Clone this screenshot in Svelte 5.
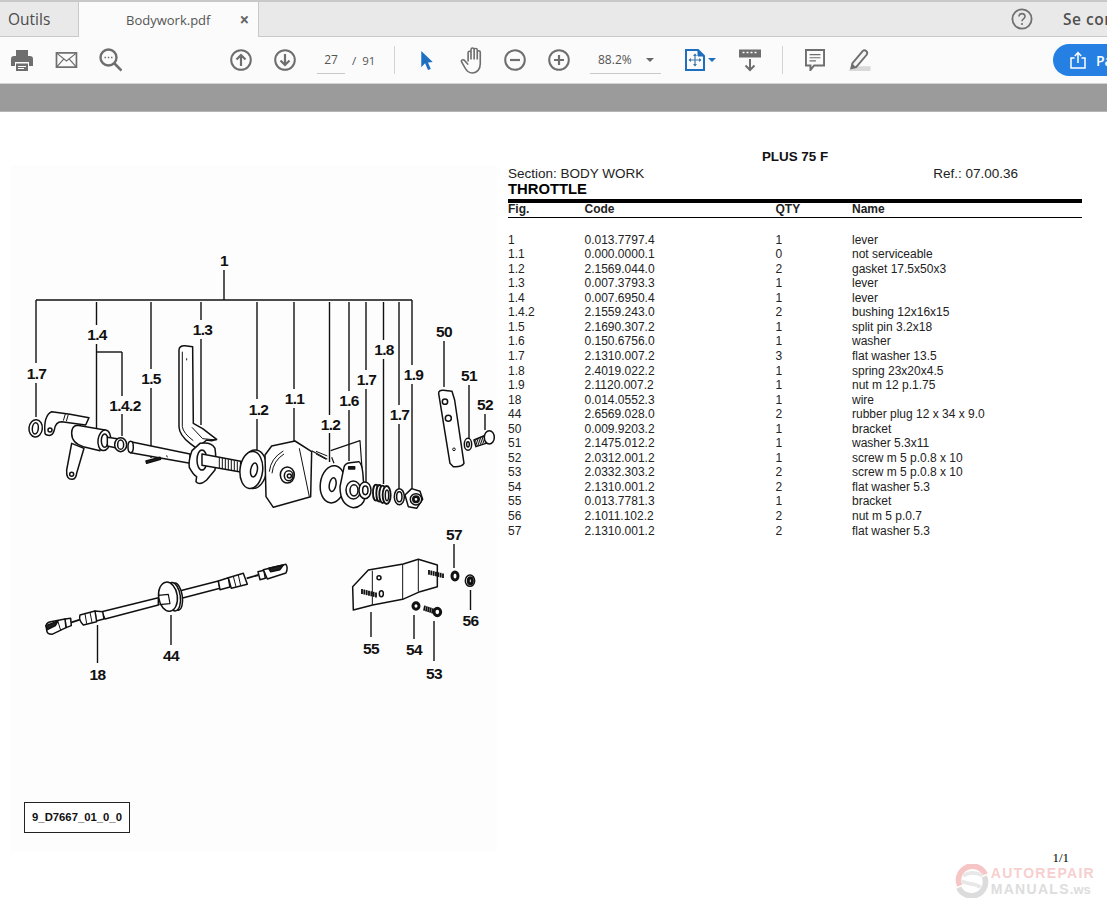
<script>
	const parts = [
		['1', '0.013.7797.4', '1', 'lever'],
		['1.1', '0.000.0000.1', '0', 'not serviceable'],
		['1.2', '2.1569.044.0', '2', 'gasket 17.5x50x3'],
		['1.3', '0.007.3793.3', '1', 'lever'],
		['1.4', '0.007.6950.4', '1', 'lever'],
		['1.4.2', '2.1559.243.0', '2', 'bushing 12x16x15'],
		['1.5', '2.1690.307.2', '1', 'split pin 3.2x18'],
		['1.6', '0.150.6756.0', '1', 'washer'],
		['1.7', '2.1310.007.2', '3', 'flat washer 13.5'],
		['1.8', '2.4019.022.2', '1', 'spring 23x20x4.5'],
		['1.9', '2.1120.007.2', '1', 'nut m 12 p.1.75'],
		['18', '0.014.0552.3', '1', 'wire'],
		['44', '2.6569.028.0', '2', 'rubber plug 12 x 34 x 9.0'],
		['50', '0.009.9203.2', '1', 'bracket'],
		['51', '2.1475.012.2', '1', 'washer 5.3x11'],
		['52', '2.0312.001.2', '1', 'screw m 5 p.0.8 x 10'],
		['53', '2.0332.303.2', '2', 'screw m 5 p.0.8 x 10'],
		['54', '2.1310.001.2', '2', 'flat washer 5.3'],
		['55', '0.013.7781.3', '1', 'bracket'],
		['56', '2.1011.102.2', '2', 'nut m 5 p.0.7'],
		['57', '2.1310.001.2', '2', 'flat washer 5.3']
	];

	// callouts of the drawing: x, label y, then the leader segments
	const callouts = [
		{ t: '1', x: 224, y: 260, lines: [[224, 270, 300]] },
		{ t: '1.7', x: 36.500, y: 373, lines: [[36, 300, 363], [36, 383, 417]] },
		{ t: '1.4', x: 97, y: 334, lines: [[96.500, 302, 325], [96.500, 344, 429]] },
		{ t: '1.4.2', x: 125, y: 405, lines: [[122, 352, 396], [122, 414, 436]] },
		{ t: '1.5', x: 151, y: 378, lines: [[151, 302, 369], [151, 388, 458]] },
		{ t: '1.3', x: 202.500, y: 329, lines: [[201, 302, 320], [201, 339, 425]] },
		{ t: '1.2', x: 258.500, y: 409, lines: [[257, 302, 399], [257, 419, 450]] },
		{ t: '1.1', x: 294.500, y: 398, lines: [[294, 302, 389], [294, 408, 441]] },
		{ t: '1.2', x: 330.500, y: 424, lines: [[329.500, 302, 415], [329.500, 433, 462]] },
		{ t: '1.6', x: 349, y: 400, lines: [[349, 302, 391], [349, 410, 461]] },
		{ t: '1.7', x: 366.500, y: 379, lines: [[366, 302, 370], [366, 389, 482]] },
		{ t: '1.8', x: 384, y: 349, lines: [[383.500, 302, 340], [383.500, 359, 484]] },
		{ t: '1.7', x: 399.500, y: 414, lines: [[399, 302, 405], [399, 424, 490]] },
		{ t: '1.9', x: 413.500, y: 374, lines: [[412, 300, 365], [412, 384, 490]] },
		{ t: '50', x: 444, y: 331, lines: [[444, 341, 387]] },
		{ t: '51', x: 469, y: 375, lines: [[469, 385, 440]] },
		{ t: '52', x: 485, y: 404, lines: [[485, 414, 430]] },
		{ t: '57', x: 454, y: 534, lines: [[454, 544, 568]] },
		{ t: '56', x: 470.500, y: 620, lines: [[470.500, 590, 610]] },
		{ t: '55', x: 371, y: 648, lines: [[371, 612, 637]] },
		{ t: '54', x: 414, y: 649, lines: [[414, 615, 639]] },
		{ t: '53', x: 434, y: 673, lines: [[434, 621, 661]] },
		{ t: '18', x: 97.500, y: 674, lines: [[97.500, 625, 663]] },
		{ t: '44', x: 171, y: 655, lines: [[171, 615, 645]] }
	];

	const threads = [0, 1, 2, 3, 4, 5, 6];
</script>

<div class="viewer">
	<header class="tabbar">
		<div class="tab tools">Outils</div>
		<div class="tab doc">
			<span class="doc-name">Bodywork.pdf</span>
			<span class="close">×</span>
		</div>
		<div class="tab-right">
			<svg class="help" viewBox="0 0 22 22" width="22" height="22">
				<circle cx="11" cy="11" r="9.600" fill="none" stroke="#707070" stroke-width="1.800" />
				<path d="M8 8.600c0-4 6-4 6 0 0 2.300-3 2.300-3 4.600" fill="none" stroke="#707070" stroke-width="1.600" />
				<circle cx="11" cy="16" r="1.100" fill="#707070" />
			</svg>
			<span class="signin">Se connecter</span>
		</div>
	</header>

	<nav class="toolbar">
		<div class="group file">
			<span class="tool">
				<svg viewBox="0 0 24 24" width="24" height="24" fill="#6e6e6e">
					<path d="M6 2h12v6H6z" />
					<path d="M4 8h16a3 3 0 0 1 3 3v7h-4v-4H5v4H1v-7a3 3 0 0 1 3-3z" />
					<path d="M6 15.500h12V23H6z" />
					<path d="M8 18h8v1H8zM8 20h6v1H8z" fill="#fff" />
				</svg>
			</span>
			<span class="tool">
				<svg viewBox="-1 0 24 20" width="24" height="19">
					<rect x="1" y="2" width="21" height="15" fill="none" stroke="#6e6e6e" stroke-width="1.800" />
					<path d="M1.500 2.500l10 8 10-8M1.500 16.500l7-8M21.500 16.500l-7-8" fill="none" stroke="#6e6e6e" stroke-width="1.300" />
				</svg>
			</span>
			<span class="tool">
				<svg viewBox="-1 0 24 24" width="24" height="24">
					<circle cx="9.500" cy="9.500" r="8" fill="none" stroke="#6e6e6e" stroke-width="2.400" />
					<path d="M15.500 15.500l7 7" stroke="#6e6e6e" stroke-width="2.600" />
					<path d="M5.500 9.500h1.500M8.800 9.500h1.500M12 9.500h1.500" stroke="#6e6e6e" stroke-width="1.600" />
				</svg>
			</span>
		</div>

		<div class="group nav">
			<span class="tool">
				<svg viewBox="0 0 22 22" width="22" height="22" fill="none" stroke="#6e6e6e">
					<circle cx="11" cy="11" r="9.800" stroke-width="2" />
					<path d="M11 17V6M6.500 10.500L11 6l4.500 4.500" stroke-width="2.200" />
				</svg>
			</span>
			<span class="tool">
				<svg viewBox="0 0 22 22" width="22" height="22" fill="none" stroke="#6e6e6e">
					<circle cx="11" cy="11" r="9.800" stroke-width="2" />
					<path d="M11 5v11M6.500 11.500L11 16l4.500-4.500" stroke-width="2.200" />
				</svg>
			</span>
			<span class="field page-field">27</span>
			<span class="total">/&nbsp; 91</span>
		</div>
		<span class="sep first"></span>

		<div class="group select">
			<span class="tool">
				<svg viewBox="0 0 14 22" width="14" height="21">
					<path d="M1 1l12 11.500-5 .5 3 7-3 1-3-7-4 4z" fill="#1f6fc0" />
				</svg>
			</span>
			<span class="tool">
				<svg viewBox="0 0 19 27" width="22" height="28" fill="none" stroke="#6e6e6e" stroke-width="1.400" preserveAspectRatio="none">
					<path d="M7 15V6.500c0-2 2.500-2 2.500 0V13M9.500 13V3.500c0-2 2.700-2 2.700 0V13M12.200 13V3.800c0-2 2.700-2 2.700 0V13M14.900 13V6c0-2 2.600-2 2.600 0v11c0 5-2.500 9-7 9-3 0-4.500-1.500-6-4.500L1.500 15.500c-1-2 1.500-3 2.500-1.500L7 18" />
				</svg>
			</span>
			<span class="tool">
				<svg viewBox="0 0 22 22" width="22" height="22" fill="none" stroke="#6e6e6e">
					<circle cx="11" cy="11" r="9.800" stroke-width="2" />
					<path d="M6 11h10" stroke-width="2.200" />
				</svg>
			</span>
			<span class="tool">
				<svg viewBox="0 0 22 22" width="22" height="22" fill="none" stroke="#6e6e6e">
					<circle cx="11" cy="11" r="9.800" stroke-width="2" />
					<path d="M6 11h10M11 6v10" stroke-width="2.200" />
				</svg>
			</span>
			<span class="field zoom-field">88.2%<i class="caret grey"></i></span>
		</div>

		<div class="group view">
			<span class="tool fit">
				<svg viewBox="0 0 20 22" width="20" height="22" fill="none" stroke="#1f6fc0">
					<path d="M1 1h12l6 6v14H1z" stroke-width="2" />
					<path d="M13 1v6h6z" fill="#1f6fc0" />
					<path d="M10 5v12M4 11h12" stroke="#3f78ad" stroke-width="1.200" />
					<path d="M8 7l2-2.500L12 7zM8 15l2 2.500 2-2.500zM6 9l-2.500 2L6 13zM14 9l2.500 2L14 13z" fill="#3f78ad" stroke="none" />
				</svg>
				<i class="caret blue"></i>
			</span>
			<span class="tool kbd">
				<svg viewBox="0 0 24 24" width="24" height="24" fill="none" stroke="#6e6e6e">
					<rect x="1" y="1.500" width="22" height="8" fill="#6e6e6e" stroke="none" />
					<path d="M4.500 4.500h2M8.500 4.500h2M12.500 4.500h2M16.500 4.500h2" stroke="#fff" stroke-width="1.600" />
					<path d="M12 11v11M7.500 17.500L12 22l4.500-4.500" stroke-width="2" />
				</svg>
			</span>
		</div>
		<span class="sep second"></span>

		<div class="group review">
			<span class="tool">
				<svg viewBox="0 0 22 24" width="20" height="22" fill="none" stroke="#6e6e6e">
					<path d="M1 1h20v17H10l-4 5v-5H1z" stroke-width="2.200" />
					<path d="M5 6h12M5 9.500h12M5 13h7" stroke-width="1.300" />
				</svg>
			</span>
			<span class="tool">
				<svg viewBox="0 0 24 24" width="24" height="23">
					<path d="M1 23l4-5h19v5z" fill="#d9d9d9" />
					<path d="M4 20l1-5L16 2c2-2 6 1 4 4L9 19z" fill="#f4f4f4" stroke="#6e6e6e" stroke-width="2" />
					<path d="M5 15l4 4-5 1z" fill="#6e6e6e" />
				</svg>
			</span>
		</div>

		<button class="share">
			<svg viewBox="0 0 16 18" width="16" height="18" fill="none" stroke="#fff" stroke-width="1.500">
				<path d="M4.500 7H1v10h14V7h-3.500M8 12V2M4.800 5L8 1.500 11.200 5" />
			</svg>
			<span>Partager</span>
		</button>
	</nav>

	<div class="band"></div>

	<main class="page">
		<figure class="plate">
			<svg viewBox="10 165 487 687" width="487" height="687">
				<!-- bracket over the exploded view -->
				<path class="lead" d="M36 300H412" />
				<path class="lead" d="M96.500 352H122" />
				{#each callouts as c}
					{#each c.lines as l}
						<path class="lead" d="M{l[0]} {l[1]}V{l[2]}" />
					{/each}
					<text class="num" x={c.x} y={c.y + 5.500}>{c.t}</text>
				{/each}

				<!-- throttle levers, left half -->
				<g transform="translate(20 380) scale(.3333)" class="parts">
					<ellipse cx="47" cy="145" rx="20" ry="26" transform="rotate(6 47 145)" />
					<ellipse class="hole" cx="46" cy="145" rx="9" ry="17" transform="rotate(6 46 145)" />
					<path d="M75 160Q70 108 95 95L150 103 207 113 197 135 125 125Q106 125 103 150 98 168 85 166 75 165 75 160Z" />
					<circle class="hole" cx="90" cy="150" r="6" />
					<path class="thin" d="M145 103L139 124M136 102L130 122" />
					<path d="M155 190L140 270Q138 300 158 298 168 296 170 280L192 205Z" />
					<circle class="hole" cx="155" cy="283" r="6" />
					<path d="M155 160Q155 138 172 136L255 150 240 212 190 200Q155 190 155 160Z" />
					<ellipse cx="253" cy="181" rx="19" ry="31" transform="rotate(8 253 181)" />
					<ellipse class="hole" cx="254" cy="182" rx="10" ry="20" />
					<path d="M262 172L292 176 290 204 262 198Z" />
					<ellipse cx="302" cy="194" rx="18" ry="21" />
					<ellipse class="hole" cx="302" cy="194" rx="9" ry="14" />
					<path d="M332 185L510 222 510 250 332 218Z" />
					<ellipse cx="332" cy="201" rx="8" ry="17" />
					<path class="black" d="M378 243L420 232 422 238 380 250Z" />
					<path class="thin" d="M440 226L442 232" />
					<path d="M477 -90Q478 -104 495 -103L518 -100 520 130 548 146 590 178 575 182 560 180 530 205 510 190Q478 165 477 140Z" />
					<path class="thin" d="M487 -85V140Q490 160 520 182M500 -65v6M516 142L548 176 590 180" />
					<path d="M516 212Q505 240 508 262 520 285 530 290L528 305Q540 318 560 300L585 270Q590 240 585 205 575 185 540 190Z" />
					<ellipse class="hole" cx="546" cy="240" rx="15" ry="30" />
					<path d="M546 222L662 244 662 276 546 256Z" />
					{#each threads as i}
						<path class="thin" d="M{598 + i * 9} {232 + i * 2}V{266 + i * 1.500}" />
					{/each}
				</g>

				<!-- plate, gaskets, spring and nut -->
				<g transform="translate(240 380) scale(.3333)" class="parts">
					<path class="open" d="M215 212L262 238M272 212L360 182 366 265 330 278M275 232L282 250" />
					<path class="thin" d="M228 214L262 228M228 222L258 238" />
					<ellipse cx="42" cy="268" rx="38" ry="58" transform="rotate(6 42 268)" />
					<ellipse cx="34" cy="270" rx="34" ry="56" transform="rotate(6 34 270)" />
					<ellipse class="hole" cx="42" cy="270" rx="10" ry="21" transform="rotate(10 42 270)" />
					<path d="M95 198L165 183 215 215 212 350 100 382 78 350 75 225Z" />
					<path class="thin" d="M178 205L208 350M88 275Q92 235 130 213M96 280Q100 242 132 222" />
					<ellipse cx="142" cy="285" rx="21" ry="24" />
					<ellipse cx="146" cy="287" rx="13" ry="15" />
					<circle class="hole" cx="148" cy="288" r="6" />
					<ellipse cx="278" cy="313" rx="37" ry="56" transform="rotate(8 278 313)" />
					<ellipse class="hole" cx="278" cy="314" rx="10" ry="21" transform="rotate(10 278 314)" />
					<path d="M312 262Q314 250 330 248L356 245Q368 250 370 300L376 350Q370 382 340 383 300 375 300 320Z" />
					<rect x="326" y="260" width="18" height="7" class="black" />
					<ellipse cx="340" cy="330" rx="22" ry="27" />
					<ellipse cx="342" cy="331" rx="12" ry="17" class="hole" />
					<ellipse cx="375" cy="331" rx="18" ry="25" />
					<ellipse class="hole" cx="376" cy="331" rx="8" ry="13" />
					<ellipse class="coil" cx="408" cy="338" rx="9" ry="24" />
					<ellipse class="coil" cx="418" cy="340" rx="9" ry="25" />
					<ellipse class="coil" cx="428" cy="343" rx="10" ry="26" />
					<ellipse class="coil" cx="440" cy="345" rx="12" ry="27" />
					<ellipse class="hole" cx="441" cy="346" rx="5" ry="16" />
					<ellipse cx="478" cy="350" rx="15" ry="24" />
					<ellipse class="hole" cx="478" cy="350" rx="8" ry="15" />
					<path d="M495 345L515 326 540 334 548 358 530 385 505 380Z" />
					<circle cx="528" cy="358" r="17" />
					<circle class="hole heavy" cx="528" cy="358" r="8" />
					<path d="M596 40Q596 30 610 31L636 34 644 60 672 250Q665 262 640 260L630 250Z" />
					<circle class="hole" cx="615" cy="65" r="8" />
					<circle class="hole" cx="625" cy="115" r="9" />
					<circle class="thin" cx="642" cy="208" r="4" />
					<ellipse cx="684" cy="193" rx="11" ry="18" />
					<ellipse class="hole" cx="684" cy="193" rx="4" ry="8" />
					<path d="M702 180L738 165 745 188 708 200Z" />
					{#each threads as i}
						<path class="thin" d="M{706 + i * 5} {178 - i * 2}L{712 + i * 5} {198 - i * 2}" />
					{/each}
					<ellipse cx="748" cy="172" rx="15" ry="20" />
				</g>

				<!-- throttle cable -->
				<g transform="translate(30 555) scale(.3333)" class="parts">
					<path d="M215 170L385 128 385 150 225 192Z" />
					<path d="M448 108L565 78 570 100 455 130Z" />
					<path d="M195 168L218 170 222 192 198 198Z" />
					<path d="M150 180L195 168 200 200 160 210Q145 195 150 180Z" />
					<path class="thin" d="M165 176L170 206M180 172L186 202" />
					<path class="thick" d="M115 205L150 194" />
					<path d="M105 192L122 190 124 212 108 218Z" />
					<path d="M48 212Q50 202 62 200L105 192 108 218 66 238Q50 238 50 225Z" />
					<path class="black" d="M48 212L84 198 76 212 52 224Z" />
					<path class="thin" d="M84 200L92 226" />
					<path d="M395 118L438 115 438 150 395 150Z" />
					<ellipse cx="440" cy="125" rx="17" ry="41" transform="rotate(-8 440 125)" />
					<ellipse cx="431" cy="125" rx="20" ry="43" transform="rotate(-8 431 125)" />
					<ellipse cx="414" cy="125" rx="28" ry="44" transform="rotate(-8 414 125)" />
					<path d="M385 121L415 118 420 146 388 149" class="open" />
					<path d="M565 78L595 68 600 96 570 104Z" />
					<path d="M595 68L640 55 652 88 604 100Z" />
					<path class="thin" d="M610 64L618 95M625 60L632 92" />
					<path class="thick" d="M650 70L685 60" />
					<path d="M684 50L702 46 706 70 690 74Z" />
					<path d="M700 44L768 28Q775 38 768 54L712 72Z" />
					<path class="black" d="M716 40L760 30 750 44 722 50Z" />
				</g>

				<!-- bracket with studs and loose hardware -->
				<g transform="translate(340 540) scale(.3333)" class="parts">
					<path d="M38 140L85 90 190 72 235 58 292 75 292 140 240 155 188 178 98 195 40 210Z" />
					<path class="thin" d="M97 92V195M188 72V178M235 58V155" />
					<circle class="hole" cx="117" cy="113" r="6" />
					{#each threads as i}
						<path class="thick" d="M{66 + i * 7} {147 + i * 1.700}V{162 + i * 1.700}" />
						<path class="thick" d="M{267 + i * 7} {90 + i * 1.700}V{104 + i * 1.700}" />
					{/each}
					<ellipse cx="124" cy="161" rx="6" ry="9" />
					<ellipse cx="345" cy="108" rx="9" ry="12" class="ring" />
					<ellipse cx="390" cy="122" rx="14" ry="17" />
					<ellipse cx="391" cy="122" rx="6" ry="9" class="ring" />
					<ellipse cx="228" cy="198" rx="9" ry="10" class="ring" />
					{#each threads.slice(0, 5) as i}
						<path class="thick" d="M{255 + i * 6} {197 + i * 2}L{252 + i * 6} {212 + i * 2}" />
					{/each}
					<ellipse cx="292" cy="216" rx="10" ry="11" class="ring" />
				</g>

				<rect class="tag" x="24.500" y="802.500" width="105" height="30" />
				<text class="tag-text" x="77" y="821">9_D7667_01_0_0</text>
			</svg>
		</figure>

		<section class="sheet">
			<h1>PLUS 75 F</h1>
			<div class="meta">
				<span>Section: BODY WORK</span>
				<span class="ref">Ref.: 07.00.36</span>
			</div>
			<h2>THROTTLE</h2>
			<div class="row head">
				<span>Fig.</span>
				<span>Code</span>
				<span>QTY</span>
				<span>Name</span>
			</div>
			<div class="rows">
				{#each parts as p}
					<div class="row">
						<span>{p[0]}</span>
						<span>{p[1]}</span>
						<span>{p[2]}</span>
						<span>{p[3]}</span>
					</div>
				{/each}
			</div>
			<div class="folio">1/1</div>
		</section>

		<!-- watermark over the page -->
		<div class="mark">
			<svg viewBox="0 0 36 36" width="34" height="34" fill="none">
				<path d="M5 23A14.500 14.500 0 0 1 32 11" stroke="#f6c6c6" stroke-width="6" />
				<path d="M31 13A14.500 14.500 0 0 1 4 25" stroke="#dcdcdc" stroke-width="6" />
				<path d="M9 13c5-5 14-4 20-1M7 18c6 4 16 2 20 7" stroke="#e8e8e8" stroke-width="4" />
			</svg>
			<div class="mark-text">
				<span class="m1">AUTOREPAIR</span>
				<span class="m2">MANUALS<small>.ws</small></span>
			</div>
		</div>
	</main>
</div>

<style>
	:global(body) {
		margin: 0;
		background: #fff;
		overflow: hidden;
	}
	.viewer {
		width: 1107px;
		height: 911px;
		overflow: hidden;
		display: flex;
		flex-direction: column;
		font-family: "Open Sans", sans-serif;
		color: #4b4b4b;
	}

	.tabbar {
		height: 37px;
		box-sizing: border-box;
		flex: none;
		display: flex;
		background: #e9e9e9;
		border-top: 2px solid #c8c8c8;
		border-bottom: 1px solid #c9c9c9;
	}
	.tab {
		box-sizing: border-box;
		display: flex;
		align-items: center;
	}
	.tools {
		width: 79px;
		padding-left: 8px;
		font-size: 15.500px;
		border-right: 1px solid #c9c9c9;
	}
	.doc {
		width: 180px;
		height: 35px;
		padding-left: 47px;
		background: #fbfbfb;
		border-right: 1px solid #c9c9c9;
		font-size: 13px;
		color: #555;
	}
	.close {
		margin-left: 29px;
		font-size: 17px;
		font-weight: 700;
		color: #666;
	}
	.tab-right {
		margin-left: auto;
		width: 96px;
		display: flex;
		align-items: center;
		overflow: hidden;
		white-space: nowrap;
		flex: none;
	}
	.help {
		margin-right: 30px;
		flex: none;
	}
	.signin {
		font-size: 15.500px;
		font-weight: 600;
		letter-spacing: 0.500px;
		color: #505050;
	}

	.toolbar {
		height: 47px;
		flex: none;
		box-sizing: border-box;
		display: flex;
		align-items: center;
		background: #fbfbfb;
		border-bottom: 1px solid #d2d2d2;
		white-space: nowrap;
	}
	.group {
		display: flex;
		align-items: center;
		flex: none;
	}
	.tool {
		width: 44px;
		height: 32px;
		display: flex;
		align-items: center;
		justify-content: center;
		flex: none;
	}
	.nav {
		margin-left: 87px;
	}
	.field {
		height: 28px;
		box-sizing: border-box;
		display: flex;
		align-items: center;
		border-bottom: 1px solid #c8c8c8;
		font-size: 12px;
		color: #555;
	}
	.page-field {
		width: 28px;
		justify-content: center;
		margin-left: 10px;
	}
	.total {
		margin-left: 7px;
		font-size: 11.500px;
		color: #555;
		width: 34px;
	}
	.sep {
		width: 1px;
		height: 28px;
		background: #d4d4d4;
		flex: none;
	}
	.first {
		margin-left: 8px;
	}
	.select {
		margin-left: 10px;
	}
	.zoom-field {
		width: 71px;
		padding-left: 8px;
		margin-left: 9px;
		gap: 14px;
	}
	.caret {
		width: 0;
		height: 0;
		border-left: 4px solid transparent;
		border-right: 4px solid transparent;
		display: block;
	}
	.grey {
		border-top: 4px solid #666;
	}
	.blue {
		border-top: 4px solid #1f6fc0;
		margin-left: 3px;
	}
	.view {
		margin-left: 16px;
	}
	.fit {
		width: 46px;
	}
	.kbd {
		margin-left: 4px;
		width: 46px;
	}
	.second {
		margin-left: 9px;
	}
	.review {
		margin-left: 10px;
	}
	.share {
		margin-left: 172px;
		width: 130px;
		height: 32px;
		flex: none;
		border: 0;
		padding: 0 0 0 17px;
		border-radius: 16px;
		background: #2680e3;
		color: #fff;
		display: flex;
		align-items: center;
		gap: 10px;
		font: 600 14px "Open Sans", sans-serif;
	}

	.band {
		height: 27px;
		flex: none;
		background: #9b9b9b;
		border-bottom: 1px solid #b5b5b5;
	}

	.page {
		flex: 1;
		position: relative;
		display: flex;
		background: #fff;
		color: #000;
		font-family: "Liberation Sans", Arial, sans-serif;
	}
	.plate {
		margin: 53px 0 0 10px;
		width: 487px;
		height: 687px;
		background: #fdfdfd;
		flex: none;
	}
	.plate svg {
		display: block;
	}
	.parts :global(*) {
		fill: #fff;
		stroke: #111;
		stroke-width: 4.500;
		stroke-linejoin: round;
	}
	.parts .thin {
		fill: none;
		stroke-width: 3;
	}
	.parts .open {
		fill: none;
		stroke-width: 3.500;
	}
	.parts .thick {
		fill: none;
		stroke-width: 5.500;
	}
	.parts .hole {
		fill: #fff;
		stroke-width: 4.500;
	}
	.parts .coil {
		stroke-width: 5.500;
	}
	.parts .heavy {
		stroke-width: 8;
	}
	.parts .ring {
		fill: #fff;
		stroke-width: 9;
	}
	.parts .black {
		fill: #222;
	}
	.lead {
		fill: none;
		stroke: #111;
		stroke-width: 1.400;
	}
	.num {
		font: 700 15.500px "Liberation Sans", Arial, sans-serif;
		letter-spacing: -0.600px;
		text-anchor: middle;
		fill: #111;
	}
	.tag {
		fill: #fff;
		stroke: #222;
		stroke-width: 1;
	}
	.tag-text {
		font: 700 11.300px "Liberation Sans", Arial, sans-serif;
		text-anchor: middle;
		fill: #111;
	}

	.sheet {
		margin-left: 11px;
		width: 574px;
		flex: none;
		padding-top: 38px;
	}
	h1 {
		margin: 0;
		font-size: 13.400px;
		line-height: 14px;
		font-weight: 700;
		text-align: center;
		color: #111;
	}
	.meta {
		margin-top: 2px;
		display: flex;
		font-size: 13.500px;
		line-height: 15px;
		color: #222;
	}
	.ref {
		margin-left: 289px;
	}
	h2 {
		margin: 0;
		font-size: 14.800px;
		line-height: 17px;
		font-weight: 700;
	}
	.row {
		display: grid;
		grid-template-columns: 76.500px 191px 76.500px 1fr;
		font-size: 12px;
		height: 14.550px;
		line-height: 14.550px;
		color: #222;
	}
	.head {
		margin-top: 1px;
		line-height: 13px;
		box-sizing: border-box;
		border-top: 4px solid #000;
		border-bottom: 1px solid #000;
		font-weight: 700;
		height: 19px;
	}
	.rows {
		margin-top: 14.600px;
	}
	.folio {
		margin-top: 312px;
		padding-right: 13px;
		text-align: right;
		font: 13px "Liberation Serif", serif;
	}
	.mark {
		position: absolute;
		right: 12px;
		bottom: 13px;
		display: flex;
		align-items: center;
		gap: 2px;
	}
	.mark-text {
		display: flex;
		flex-direction: column;
		font: 700 14px/16px "Liberation Sans", Arial, sans-serif;
		letter-spacing: 1.300px;
	}
	.m1 {
		color: #f7cfcf;
	}
	.m2 {
		color: #dddddd;
	}
	.m2 small {
		font-size: 13px;
		line-height: 1;
		letter-spacing: 0;
	}
</style>
